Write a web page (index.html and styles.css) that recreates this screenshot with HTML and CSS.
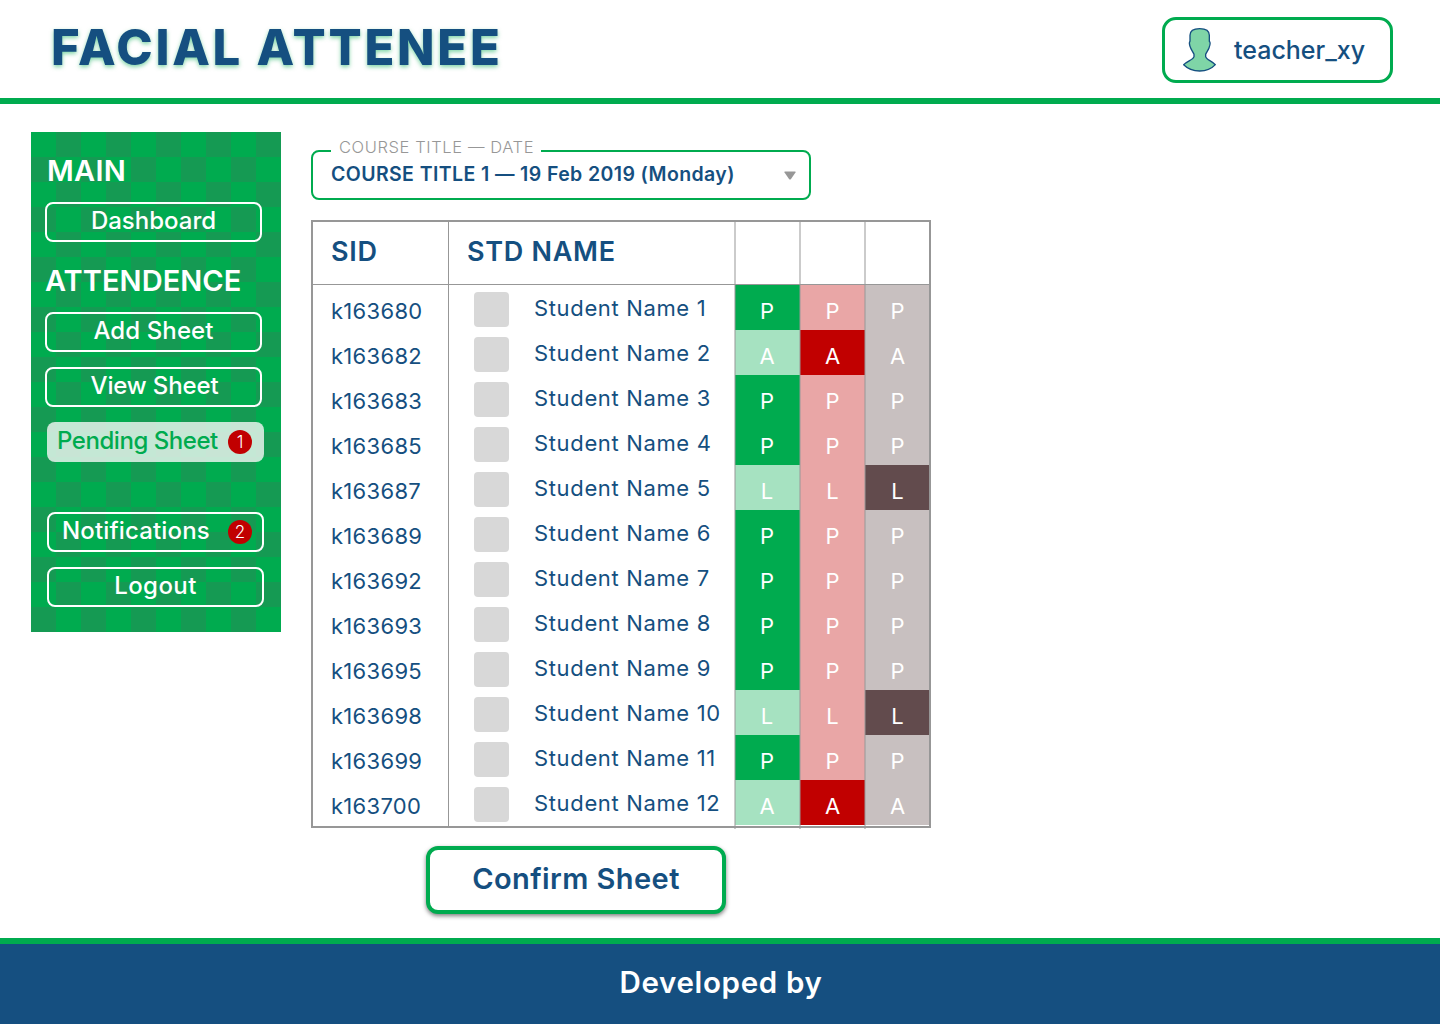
FILE: index.html
```html
<!DOCTYPE html>
<html lang="en">
<head>
<meta charset="utf-8">
<title>Facial Attenee</title>
<link rel="stylesheet" href="styles.css">
</head>
<body>
<header class="header">
  <h1 class="brand">FACIAL ATTENEE</h1>
  <div class="user">
    <svg class="avatar" viewBox="0 0 99 132"><path d="M21 22C21 7 33 2 50 2S79 7 79 22V40C82 42 81 52 78 60C76 66 71 71 68 79V86C70 95 86 99 97 110C86 122 68 129 50 129S14 122 2 110C13 99 31 95 33 86V79C30 71 25 66 23 60C19 52 18 42 21 40Z"/></svg>
    <span class="user-name">teacher_xy</span>
  </div>
</header>

<main class="page">
  <nav class="sidebar">
    <h2 class="nav-title nav-title-main">MAIN</h2>
    <a class="nav-btn">Dashboard</a>
    <h2 class="nav-title nav-title-att">ATTENDENCE</h2>
    <a class="nav-btn add">Add Sheet</a>
    <a class="nav-btn view">View Sheet</a>
    <a class="nav-btn shifted active"><span>Pending Sheet</span><b class="count">1</b></a>
    <a class="nav-btn shifted notif"><span>Notifications</span><b class="count">2</b></a>
    <a class="nav-btn shifted logout">Logout</a>
  </nav>

  <section class="content">
    <fieldset class="select">
      <legend>COURSE TITLE — DATE</legend>
      <div class="select-row">
        <span>COURSE TITLE 1 — 19 Feb 2019 (Monday)</span>
        <svg class="arrow" viewBox="0 0 12 9"><path d="M1 .5H11Q12 .5 11.5 1.5L7 8Q6 9 5 8L.5 1.5Q0 .5 1 .5Z"/></svg>
      </div>
    </fieldset>

    <div class="sheet">
      <div class="row head"><span class="sid">SID</span><span class="name">STD NAME</span><i class="c"></i><i class="c"></i><i class="c"></i></div>
      <div class="row"><span class="sid">k163680</span><span class="name"><i class="photo"></i>Student Name 1</span><i class="c p on">P</i><i class="c a">P</i><i class="c l">P</i></div>
      <div class="row"><span class="sid">k163682</span><span class="name"><i class="photo"></i>Student Name 2</span><i class="c p">A</i><i class="c a on">A</i><i class="c l">A</i></div>
      <div class="row"><span class="sid">k163683</span><span class="name"><i class="photo"></i>Student Name 3</span><i class="c p on">P</i><i class="c a">P</i><i class="c l">P</i></div>
      <div class="row"><span class="sid">k163685</span><span class="name"><i class="photo"></i>Student Name 4</span><i class="c p on">P</i><i class="c a">P</i><i class="c l">P</i></div>
      <div class="row"><span class="sid">k163687</span><span class="name"><i class="photo"></i>Student Name 5</span><i class="c p">L</i><i class="c a">L</i><i class="c l on">L</i></div>
      <div class="row"><span class="sid">k163689</span><span class="name"><i class="photo"></i>Student Name 6</span><i class="c p on">P</i><i class="c a">P</i><i class="c l">P</i></div>
      <div class="row"><span class="sid">k163692</span><span class="name"><i class="photo"></i>Student Name 7</span><i class="c p on">P</i><i class="c a">P</i><i class="c l">P</i></div>
      <div class="row"><span class="sid">k163693</span><span class="name"><i class="photo"></i>Student Name 8</span><i class="c p on">P</i><i class="c a">P</i><i class="c l">P</i></div>
      <div class="row"><span class="sid">k163695</span><span class="name"><i class="photo"></i>Student Name 9</span><i class="c p on">P</i><i class="c a">P</i><i class="c l">P</i></div>
      <div class="row"><span class="sid">k163698</span><span class="name"><i class="photo"></i>Student Name 10</span><i class="c p">L</i><i class="c a">L</i><i class="c l on">L</i></div>
      <div class="row"><span class="sid">k163699</span><span class="name"><i class="photo"></i>Student Name 11</span><i class="c p on">P</i><i class="c a">P</i><i class="c l">P</i></div>
      <div class="row"><span class="sid">k163700</span><span class="name"><i class="photo"></i>Student Name 12</span><i class="c p">A</i><i class="c a on">A</i><i class="c l">A</i></div>
    </div>

    <button class="confirm">Confirm Sheet</button>
  </section>
</main>

<footer class="footer">Developed by</footer>
</body>
</html>
```
FILE: styles.css
```css
:root {
  --green: #00ab4f;
  --blue: #154f80;
  --grey: #979797;
}

* { box-sizing: border-box; }

body {
  margin: 0;
  height: 1024px;
  display: flex;
  flex-direction: column;
  background: #fff;
  color: var(--blue);
  font-family: "Gotham Rounded", Inter, sans-serif;
}

/* Header */
.header {
  height: 104px;
  flex: none;
  padding: 0 47px 0 51px;
  border-bottom: 6px solid var(--green);
  display: flex;
  justify-content: space-between;
  align-items: flex-start;
}
.brand {
  margin: 0;
  font-size: 49px;
  font-weight: 800;
  line-height: 95px;
  letter-spacing: 2.75px;
  text-shadow: 0 2px 4px rgba(0, 171, 79, .5);
}
.user {
  width: 231px;
  height: 66px;
  margin-top: 17px;
  padding-left: 18px;
  border: 3px solid var(--green);
  border-radius: 14px;
  display: flex;
  align-items: center;
  gap: 18px;
}
.avatar { width: 33px; height: 44px; }
.avatar path {
  fill: #7fd5a7;
  stroke: var(--blue);
  stroke-width: 4;
  stroke-linejoin: round;
}
.user-name {
  font-size: 25px;
  font-weight: 550;
  letter-spacing: 0;
  line-height: 58px;
  margin-top: -1px;
}

.page {
  height: 834px;
  flex: none;
  padding: 28px 31px 0;
  display: flex;
  align-items: flex-start;
  gap: 30px;
}

/* Sidebar */
.sidebar {
  width: 250px;
  height: 500px;
  padding-left: 14px;
  display: flex;
  flex-direction: column;
  color: #fff;
  background: repeating-conic-gradient(#159a53 0 25%, var(--green) 0 50%) 0 0 / 50px 50px;
}
.nav-title {
  margin: 0;
  height: 70px;
  font-size: 29px;
  font-weight: 600;
}
.nav-title-main { line-height: 77px; letter-spacing: .3px; padding-left: 2px; }
.nav-title-att { line-height: 78px; letter-spacing: .05px; }
.nav-btn {
  width: 217px;
  height: 40px;
  flex: none;
  border: 2px solid #fff;
  border-radius: 8px;
  font-size: 24px;
  font-weight: 550;
  line-height: 34px;
  text-align: center;
  letter-spacing: 0;
}
.nav-btn.add { letter-spacing: .1px; }
.nav-btn.view { margin-top: 15px; padding-left: 2px; letter-spacing: -.15px; }
.nav-btn.shifted { margin-left: 2px; margin-top: 15px; }
.nav-btn.active, .nav-btn.notif {
  display: flex;
  justify-content: space-between;
  padding: 0 10px 0 8px;
}
.nav-btn.active {
  border-color: transparent;
  background: rgba(245, 247, 246, .8) border-box;
  color: var(--green);
  letter-spacing: -.45px;
}
.nav-btn.notif { margin-top: 50px; padding-left: 13px; letter-spacing: .15px; }
.nav-btn.logout { letter-spacing: .45px; }
.count {
  width: 24px;
  height: 24px;
  margin-top: 6px;
  border-radius: 50%;
  background: #c10000;
  color: #fff;
  font-size: 17px;
  font-weight: 300;
  line-height: 24px;
  letter-spacing: 0;
}

/* Course selector */
.content { width: 620px; }
.select {
  width: 500px;
  height: 62px;
  margin: 6px 0 20px;
  padding: 0 13px 0 18px;
  border: 2px solid var(--green);
  border-radius: 8px;
  min-width: 0;
}
.select legend {
  padding: 0 7px 8px 8px;
  width: 210px;
  white-space: nowrap;
  font-size: 16.5px;
  font-weight: 300;
  line-height: 18px;
  letter-spacing: .6px;
  color: var(--grey);
}
.select-row {
  display: flex;
  justify-content: space-between;
  align-items: center;
  margin-top: -8px;
  font-size: 19.5px;
  font-weight: 600;
  line-height: 36px;
  letter-spacing: .4px;
}
.arrow { width: 12px; height: 9px; margin-top: 2px; fill: var(--grey); }

/* Attendance sheet */
.sheet {
  width: 620px;
  height: 608px;
  border: 2px solid var(--grey);
}
.row {
  display: grid;
  grid-template-columns: 136px 286px 65px 65px 64px;
  grid-template-rows: 100%;
  height: 45px;
  font-size: 22px;
}
.row:last-child { height: 46px; }
.row i { font-style: normal; }
.sid {
  padding-left: 18px;
  border-right: 1px solid var(--grey);
  line-height: 53px;
  letter-spacing: .3px;
}
.name {
  padding-left: 25px;
  display: flex;
  gap: 25px;
  line-height: 47px;
  letter-spacing: .65px;
  white-space: nowrap;
}
.photo {
  width: 35px;
  height: 35px;
  margin-top: 7px;
  border-radius: 4px;
  background: #d8d8d8;
}
.c {
  position: relative;
  height: 45px;
  color: #fff;
  line-height: 53px;
  text-align: center;
}
.c::before {
  content: "";
  position: absolute;
  left: -1px;
  top: 0;
  bottom: 0;
  width: 2px;
  background: rgba(151, 151, 151, .5);
}
.row:last-child .c::before { bottom: -4px; }
.p { background: #a6e2c1; padding-right: 1px; }
.a { background: #e9a6a6; }
.l { background: #c8c0c0; padding-left: 1px; }
.p.on { background: var(--green); }
.a.on { background: #c10000; }
.l.on { background: #624b4d; }

.head {
  height: 63px;
  border-bottom: 1px solid var(--grey);
  font-size: 27px;
  font-weight: 600;
}
.head .sid, .head .name { line-height: 59px; letter-spacing: .7px; }
.head .name { padding-left: 18px; }
.head .c { height: 62px; }

.confirm {
  display: block;
  width: 300px;
  height: 68px;
  margin: 18px 0 0 115px;
  padding: 0 0 3px;
  border: 4px solid var(--green);
  border-radius: 12px;
  background: #fff;
  box-shadow: 0 2px 4px rgba(0, 0, 0, .5);
  color: var(--blue);
  font: 600 29px "Gotham Rounded", Inter, sans-serif;
  letter-spacing: .42px;
}

.footer {
  height: 86px;
  flex: none;
  padding-left: 2px;
  border-top: 6px solid var(--green);
  background: var(--blue);
  color: #fff;
  font-size: 29.5px;
  font-weight: 600;
  line-height: 76px;
  letter-spacing: .65px;
  text-align: center;
}
```
